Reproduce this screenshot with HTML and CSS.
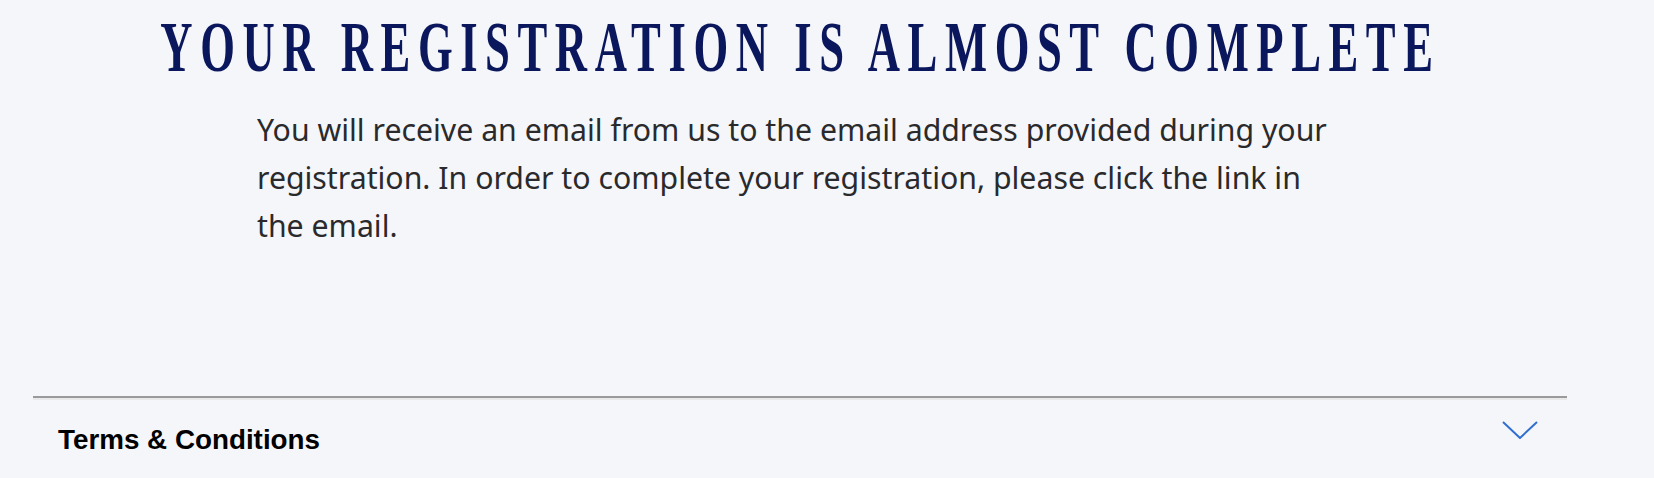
FILE: index.html
```html
<!DOCTYPE html>
<html lang="en">
<head>
<meta charset="utf-8">
<title>Registration almost complete</title>
<link rel="stylesheet" href="styles.css">
</head>
<body>
<main class="page">
  <h1 class="title"><span class="title-text">YOUR REGISTRATION IS ALMOST COMPLETE</span></h1>
  <p class="message">You will receive an email from us to the email address provided during your registration. In order to complete your registration, please click the link in the email.</p>
  <section class="accordion">
    <div class="accordion-header">
      <span class="accordion-title">Terms &amp; Conditions</span>
      <svg class="chevron" width="36" height="18" viewBox="0 0 36 18" aria-hidden="true">
        <polyline points="1,1 18,17 35,1" fill="none" stroke="#2f6fd0" stroke-width="2"/>
      </svg>
    </div>
  </section>
</main>
</body>
</html>
```

FILE: styles.css
```css
html, body {
  margin: 0;
  padding: 0;
  background: #f5f6fa;
}

.page {
  width: 1600px;
  padding-top: 7px;
}

.title {
  margin: 0;
  display: flex;
  justify-content: center;
  height: 80px;
  line-height: 80px;
  font-family: "Liberation Serif", "Times New Roman", serif;
  font-weight: 700;
  font-size: 72px;
  color: #0b175c;
  white-space: nowrap;
}

.title-text {
  display: inline-block;
  letter-spacing: 12.2px;
  transform: scaleX(0.62);
  transform-origin: center;
}

.message {
  margin: 19px 0 0 257px;
  width: 1085px;
  font-family: "Noto Sans", "Open Sans", sans-serif;
  font-size: 30.25px;
  line-height: 48px;
  color: #2a2a2c;
}

.accordion {
  margin: 146px 33px 0 33px;
  border-top: 2px solid #9a9a9a;
}

.accordion-header {
  display: flex;
  justify-content: space-between;
  align-items: flex-start;
  border-top: 2px solid #e9e9ec;
  padding: 21px 29px 0 25px;
}

.accordion-title {
  padding-top: 3px;
  font-family: "Liberation Sans", Arial, sans-serif;
  font-weight: 700;
  font-size: 27.8px;
  line-height: 32px;
  color: #000;
}

.chevron {
  display: block;
}
```
